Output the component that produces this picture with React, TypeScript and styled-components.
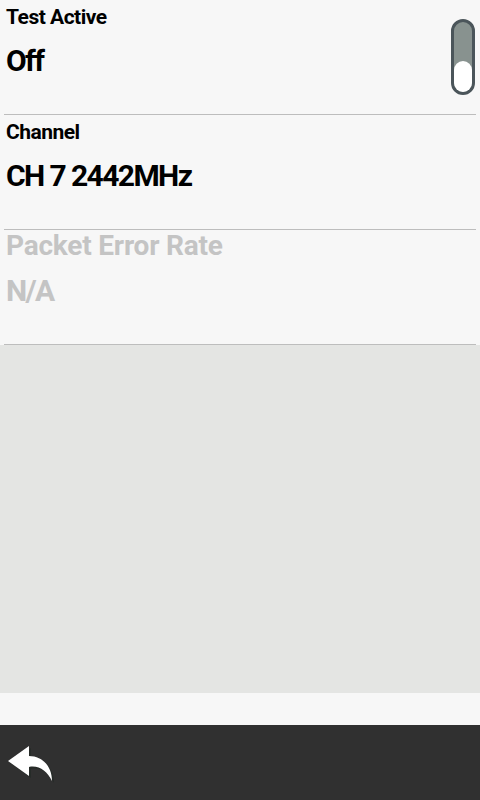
import React from "react";
import styled, { createGlobalStyle } from "styled-components";

const GlobalStyle = createGlobalStyle`
  html, body {
    margin: 0;
    padding: 0;
    background: #f7f7f7;
  }
  body {
    font-family: Roboto, "Liberation Sans", sans-serif;
  }
`;

const Screen = styled.div`
  width: 480px;
  height: 800px;
  display: flex;
  flex-direction: column;
  background: #f7f7f7;
  overflow: hidden;
`;

const List = styled.div`
  display: flex;
  flex-direction: column;
`;

const Row = styled.div`
  height: 114px;
  margin: 0 4px;
  border-bottom: 1px solid #bdbdbd;
  display: flex;
  justify-content: space-between;
  align-items: flex-start;
  padding: 0 2px;
`;

const Texts = styled.div<{ $disabled?: boolean }>`
  display: flex;
  flex-direction: column;
  color: ${(p) => (p.$disabled ? "#c4c4c4" : "#000")};
`;

const Label = styled.div<{ $big?: boolean }>`
  font-weight: 700;
  font-size: ${(p) => (p.$big ? "28px" : "21px")};
  letter-spacing: ${(p) => (p.$big ? "-0.2px" : "-0.5px")};
  line-height: 1;
  margin-top: ${(p) => (p.$big ? "2px" : "7px")};
`;

const Value = styled.div<{ $afterBig?: boolean }>`
  font-weight: 700;
  font-size: 30px;
  letter-spacing: -1.6px;
  line-height: 1;
  margin-top: ${(p) => (p.$afterBig ? "16px" : "18px")};
`;

const Toggle = styled.div`
  width: 18px;
  height: 70px;
  margin: 19px -1px 0 0;
  border: 3px solid #4b555a;
  border-radius: 12px;
  background: #88928f;
  display: flex;
  align-items: flex-end;
`;

const Knob = styled.div`
  width: 18px;
  height: 31px;
  border-radius: 10px;
  background: #fff;
`;

const Panel = styled.div`
  height: 348px;
  background: #e4e5e3;
`;

const Spacer = styled.div`
  height: 32px;
`;

const BottomBar = styled.div`
  flex: 1;
  background: #303030;
  display: flex;
  align-items: center;
  padding-left: 8px;
`;

const BackButton = styled.button`
  background: none;
  border: none;
  padding: 0;
  margin-top: 2px;
  width: 46px;
  height: 40px;
  cursor: pointer;
`;

const arrow = "M21 2 L0 17 L21 32 L21 23 C31 21 39 27 44 37 C44 23 35 12 21 12 Z";

const BackIcon = () => (
  <svg width="46" height="40" viewBox="0 0 46 40">
    <path d={arrow} fill="#262b28" transform="translate(2 2)" />
    <path d={arrow} fill="#ffffff" />
  </svg>
);

export default function App() {
  return (
    <Screen>
      <GlobalStyle />
      <List>
        <Row>
          <Texts>
            <Label>Test Active</Label>
            <Value>Off</Value>
          </Texts>
          <Toggle>
            <Knob />
          </Toggle>
        </Row>
        <Row>
          <Texts>
            <Label>Channel</Label>
            <Value>CH 7 2442MHz</Value>
          </Texts>
        </Row>
        <Row>
          <Texts $disabled>
            <Label $big>Packet Error Rate</Label>
            <Value $afterBig>N/A</Value>
          </Texts>
        </Row>
      </List>
      <Panel />
      <Spacer />
      <BottomBar>
        <BackButton aria-label="Back">
          <BackIcon />
        </BackButton>
      </BottomBar>
    </Screen>
  );
}
